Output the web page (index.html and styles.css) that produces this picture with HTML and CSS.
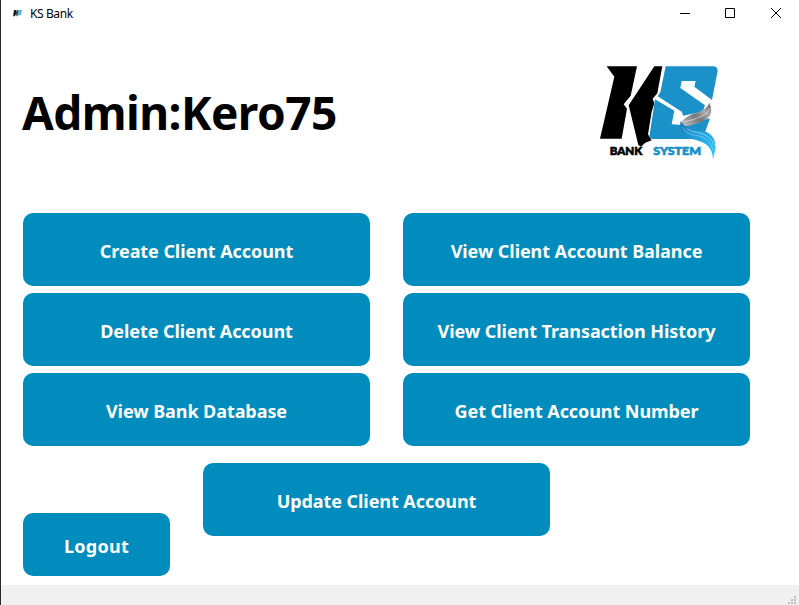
FILE: index.html
```html
<!DOCTYPE html>
<html lang="en">
<head>
<meta charset="utf-8">
<title>KS Bank</title>
<link rel="stylesheet" href="styles.css">
</head>
<body>
<div class="window">
  <header class="titlebar">
    <svg class="app-icon" viewBox="0 0 10 8"><path d="M1 0h3L3 5 2 7H0z" fill="#111"/><path d="M3 3l2-3h1L5 7H4z" fill="#333"/><path d="M6 0h4L9 6H5z" fill="#48acd4"/><path d="M7 2h2M6 4h2" stroke="#a5d6ec" stroke-width=".7"/></svg>
    <span class="app-name">KS Bank</span>
    <svg class="controls" viewBox="0 0 104 12" fill="none" stroke="#000"><path d="M1 6.500h10"/><path d="M46.500 1.500h9v9h-9z"/><path d="M92 1l10 10M102 1L92 11"/></svg>
  </header>
  <main class="content">
    <div class="heading">
      <h1>Admin:Kero75</h1>
      <svg class="logo" viewBox="0 0 420 345">
        <defs>
          <linearGradient id="silver" x1="0" y1="1" x2="1" y2="0"><stop offset="0" stop-color="#ccc"/><stop offset=".45" stop-color="#777"/><stop offset=".7" stop-color="#aaa"/><stop offset="1" stop-color="#666"/></linearGradient>
          <linearGradient id="wave" x1="0" y1="0" x2="1" y2="1"><stop offset="0" stop-color="#1678b0"/><stop offset=".5" stop-color="#24a5e2"/><stop offset="1" stop-color="#28c7fa"/></linearGradient>
        </defs>
        <path d="M50 34H141L122 122 101 148 111 161 95 251H30L73 65z"/>
        <path d="M193 34H217L202 115 188 131 193 145 185 170 174 238 185 256 166 263 153 275 145 270 116 151z"/>
        <path d="M227 34H372Q383 36 383 48L366 135 313 95 317 78H275L271 99 345 151 338 170 279 182 276 171 203 124 211 112z" fill="#1b91ca"/>
        <path d="M195 133L253 167 245 208 278 210 360 190 338 252H187Q178 249 179 239z" fill="#1b91ca"/>
        <path d="M270 208Q281 186 315 175 352 163 358 143 369 167 359 183 344 202 297 212L272 213z" fill="url(#silver)"/>
        <path d="M280 201Q345 189 362 160" fill="none" stroke="#e4e4e4" stroke-width="2"/>
        <path d="M272 198Q290 226 325 226C358 228 380 247 376 282L369 314C369 280 350 263 318 255 280 249 266 229 272 198z" fill="url(#wave)"/>
        <path d="M276 216Q288 239 323 242 358 247 370 287" fill="none" stroke="#a5dff8" stroke-width="1.500"/>
        <path d="M290 221Q305 231 325 233 360 239 374 272" fill="none" stroke="#e4f7ff" stroke-width="1.500"/>
        <text class="brand" x="59" y="299" textLength="98" lengthAdjust="spacingAndGlyphs">BANK</text>
        <text class="brand blue" x="190" y="299" textLength="143" lengthAdjust="spacingAndGlyphs">SYSTEM</text>
      </svg>
    </div>
    <div class="actions">
      <button>Create Client Account</button>
      <button>View Client Account Balance</button>
      <button>Delete Client Account</button>
      <button>View Client Transaction History</button>
      <button>View Bank Database</button>
      <button>Get Client Account Number</button>
    </div>
    <div class="bottom">
      <button class="logout">Logout</button>
      <button class="update">Update Client Account</button>
    </div>
  </main>
  <footer class="statusbar">
    <svg class="grip" viewBox="0 0 8 8" fill="#bfbfbf"><path d="M6 0h2v2H6zM3 3h2v2H3zM6 3h2v2H6zM0 6h2v2H0zM3 6h2v2H3zM6 6h2v2H6z"/></svg>
  </footer>
</div>
</body>
</html>
```
FILE: styles.css
```css
* { box-sizing: border-box; }
body { margin: 0; background: #fff; font-family: "Noto Sans", "Open Sans", sans-serif; }
.window { width: 799px; height: 605px; border-left: 1px solid #29292b; display: flex; flex-direction: column; overflow: hidden; }
.titlebar { height: 28px; padding: 0 16px 0 12px; display: flex; align-items: center; }
.app-icon { width: 9px; height: 7px; margin-bottom: 2px; }
.app-name { margin-left: 8px; font-size: 12px; letter-spacing: -0.4px; line-height: 16px; color: #000; }
.controls { width: 104px; height: 12px; margin-left: auto; margin-bottom: 2px; }
.content { height: 557px; padding: 27px 49px 0 22px; }
.heading { height: 158px; display: flex; justify-content: space-between; align-items: flex-start; }
h1 { margin: 25px 0 0 -1px; font-size: 46px; line-height: 64px; font-weight: 700; letter-spacing: -0.56px; white-space: nowrap; color: #000; }
.logo { width: 140px; height: 115px; margin-right: 20px; flex: none; }
.brand { font-family: Lato, sans-serif; font-weight: 900; font-size: 36px; stroke: #000; stroke-width: 2px; }
.blue { fill: #168fc9; stroke: #168fc9; }
.actions { display: grid; grid-template-columns: 347px 347px; column-gap: 33px; row-gap: 7px; }
button { height: 73px; border: 0; border-radius: 10px; padding: 3px 0 0; background: #008cbc; color: #fff; font: 700 18px/26px "Noto Sans", "Open Sans", sans-serif; letter-spacing: -0.07px; white-space: nowrap; }
.bottom { display: flex; gap: 33px; margin-top: 17px; }
.logout { width: 147px; height: 63px; margin-top: 50px; letter-spacing: 0.3px; }
.update { width: 347px; }
.statusbar { height: 20px; background: #f0f0f0; display: flex; justify-content: flex-end; align-items: flex-end; padding: 0 3px 1px 0; }
.grip { width: 8px; height: 8px; }
```
